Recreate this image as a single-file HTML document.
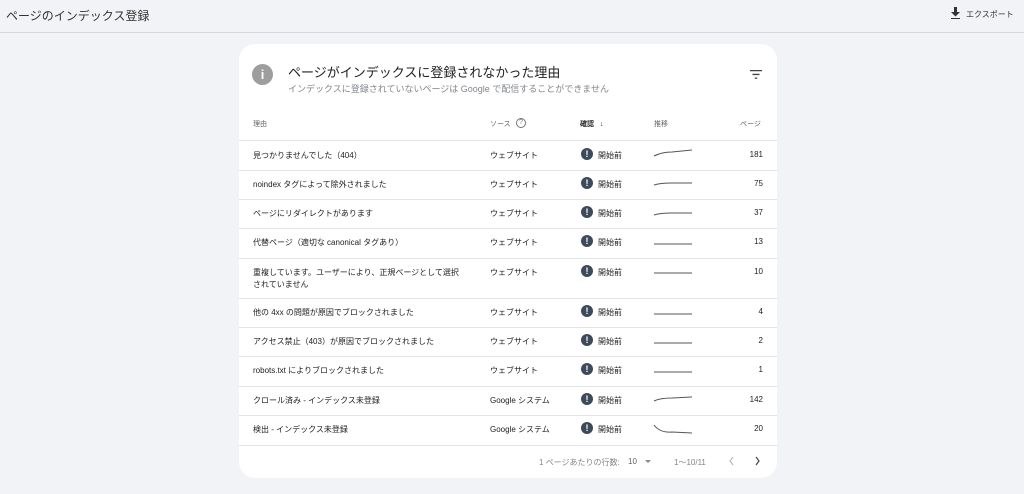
<!DOCTYPE html>
<html><head><meta charset="utf-8"><style>
*{margin:0;padding:0;box-sizing:border-box}
body{width:1024px;height:494px;background:#f1f3f6;font-family:"Liberation Sans","Noto Sans CJK JP",sans-serif;position:relative;overflow:hidden;color:#202124}
.a{position:absolute;white-space:nowrap}
.card{position:absolute;left:239px;top:44px;width:538px;height:434px;background:#fff;border-radius:16px}
.row{position:absolute;left:239px;width:538px;border-top:1px solid #e3e3e3}
.t{font-size:8px;color:#202124}
.st{width:12px;height:12px;border-radius:50%;background:#3c4a5a;color:#fff;font-size:9px;font-weight:bold;text-align:center;line-height:12px}
</style></head><body>
<div class="a" style="left:6px;top:7px;font-size:12px;color:#333">ページのインデックス登録</div>
<svg class="a" style="left:950px;top:7px" width="11" height="12" viewBox="0 0 11 12"><path d="M4 0h3v5h3L5.5 9.5 1 5h3z M1 11h9v1H1z" fill="#333"/></svg>
<div class="a" style="left:966px;top:9px;font-size:8px;color:#333">エクスポート</div>
<div class="a" style="left:0;top:32px;width:1024px;height:1px;background:#d4d6da"></div>
<div class="card"></div>
<div class="a" style="left:252px;top:64px;width:21px;height:21px;border-radius:50%;background:#9e9e9e;color:#fff;font-size:13px;font-weight:bold;text-align:center;line-height:21px">i</div>
<div class="a" style="left:288px;top:62px;font-size:13px;color:#202124">ページがインデックスに登録されなかった理由</div>
<div class="a" style="left:288px;top:82px;font-size:9px;color:#80868b">インデックスに登録されていないページは Google で配信することができません</div>
<svg class="a" style="left:750px;top:70px" width="12" height="9" viewBox="0 0 12 9"><path d="M0 0h12v1.3H0zM2.5 3.8h7v1.3h-7zM4.7 7.5h2.6v1.3H4.7z" fill="#444"/></svg>
<div class="a" style="left:253px;top:119px;font-size:7px;color:#5f6368">理由</div>
<div class="a" style="left:490px;top:119px;font-size:7px;color:#5f6368">ソース</div>
<div class="a" style="left:516px;top:118px;width:10px;height:10px;border:1px solid #777;border-radius:50%;font-size:7px;text-align:center;line-height:8px;color:#777">?</div>
<div class="a" style="left:580px;top:119px;font-size:7px;color:#202124;font-weight:bold">確認 <span style="margin-left:4px">↓</span></div>
<div class="a" style="left:654px;top:119px;font-size:7px;color:#5f6368">推移</div>
<div class="a" style="left:740px;top:119px;font-size:7px;color:#5f6368">ページ</div>

<div class="row" style="top:140px"></div><div class="row" style="top:170px"></div><div class="row" style="top:199px"></div><div class="row" style="top:228px"></div><div class="row" style="top:258px"></div><div class="row" style="top:298px"></div><div class="row" style="top:327px"></div><div class="row" style="top:356px"></div><div class="row" style="top:386px"></div><div class="row" style="top:415px"></div><div class="row" style="top:445px"></div>

<div class="a t" style="left:253px;top:150px">見つかりませんでした（404）</div>
<div class="a t" style="left:253px;top:179px">noindex タグによって除外されました</div>
<div class="a t" style="left:253px;top:208px">ページにリダイレクトがあります</div>
<div class="a t" style="left:253px;top:237px">代替ページ（適切な canonical タグあり）</div>
<div class="a t" style="left:253px;top:267px;line-height:12px">重複しています。ユーザーにより、正規ページとして選択<br>されていません</div>
<div class="a t" style="left:253px;top:307px">他の 4xx の問題が原因でブロックされました</div>
<div class="a t" style="left:253px;top:336px">アクセス禁止（403）が原因でブロックされました</div>
<div class="a t" style="left:253px;top:365px">robots.txt によりブロックされました</div>
<div class="a t" style="left:253px;top:395px">クロール済み - インデックス未登録</div>
<div class="a t" style="left:253px;top:424px">検出 - インデックス未登録</div>

<div class="a t" style="left:490px;top:150px">ウェブサイト</div>
<div class="a t" style="left:490px;top:179px">ウェブサイト</div>
<div class="a t" style="left:490px;top:208px">ウェブサイト</div>
<div class="a t" style="left:490px;top:237px">ウェブサイト</div>
<div class="a t" style="left:490px;top:267px">ウェブサイト</div>
<div class="a t" style="left:490px;top:307px">ウェブサイト</div>
<div class="a t" style="left:490px;top:336px">ウェブサイト</div>
<div class="a t" style="left:490px;top:365px">ウェブサイト</div>
<div class="a t" style="left:490px;top:395px">Google システム</div>
<div class="a t" style="left:490px;top:424px">Google システム</div>

<div class="a st" style="left:581px;top:148px">!</div><div class="a t" style="left:598px;top:150px">開始前</div>
<div class="a st" style="left:581px;top:177px">!</div><div class="a t" style="left:598px;top:179px">開始前</div>
<div class="a st" style="left:581px;top:206px">!</div><div class="a t" style="left:598px;top:208px">開始前</div>
<div class="a st" style="left:581px;top:235px">!</div><div class="a t" style="left:598px;top:237px">開始前</div>
<div class="a st" style="left:581px;top:265px">!</div><div class="a t" style="left:598px;top:267px">開始前</div>
<div class="a st" style="left:581px;top:305px">!</div><div class="a t" style="left:598px;top:307px">開始前</div>
<div class="a st" style="left:581px;top:334px">!</div><div class="a t" style="left:598px;top:336px">開始前</div>
<div class="a st" style="left:581px;top:363px">!</div><div class="a t" style="left:598px;top:365px">開始前</div>
<div class="a st" style="left:581px;top:393px">!</div><div class="a t" style="left:598px;top:395px">開始前</div>
<div class="a st" style="left:581px;top:422px">!</div><div class="a t" style="left:598px;top:424px">開始前</div>

<svg class="a" style="left:0;top:0" width="1024" height="494"><g fill="none" stroke="#555" stroke-width="1">
<path d="M654 156 Q662 152 672 152 L692 150"/>
<path d="M654 185 Q660 183 672 183 L692 183"/>
<path d="M654 215 Q660 213 672 213 L692 213"/>
<path d="M654 244 L692 244"/>
<path d="M654 273 L692 273"/>
<path d="M654 314 L692 314"/>
<path d="M654 343 L692 343"/>
<path d="M654 372 L692 372"/>
<path d="M654 401 Q660 398 672 398 L692 397"/>
<path d="M654 425 Q660 433 672 432 L692 433"/>
</g>
<path d="M733 457 L730 461 L733 465" fill="none" stroke="#bbb" stroke-width="1.2"/>
<path d="M756 457 L759 461 L756 465" fill="none" stroke="#444" stroke-width="1.2"/>
<path d="M645 460 L651 460 L648 463z" fill="#888"/>
</svg>

<div class="a t" style="right:261px;top:150px;">181</div>
<div class="a t" style="right:261px;top:179px">75</div>
<div class="a t" style="right:261px;top:208px">37</div>
<div class="a t" style="right:261px;top:237px">13</div>
<div class="a t" style="right:261px;top:267px">10</div>
<div class="a t" style="right:261px;top:307px">4</div>
<div class="a t" style="right:261px;top:336px">2</div>
<div class="a t" style="right:261px;top:365px">1</div>
<div class="a t" style="right:261px;top:395px">142</div>
<div class="a t" style="right:261px;top:424px">20</div>

<div class="a" style="left:539px;top:457px;font-size:8px;color:#80868b">1 ページあたりの行数:</div>
<div class="a" style="left:628px;top:457px;font-size:8px;color:#5f6368">10</div>
<div class="a" style="left:674px;top:457px;font-size:8px;color:#80868b">1～10/11</div>
</body></html>
